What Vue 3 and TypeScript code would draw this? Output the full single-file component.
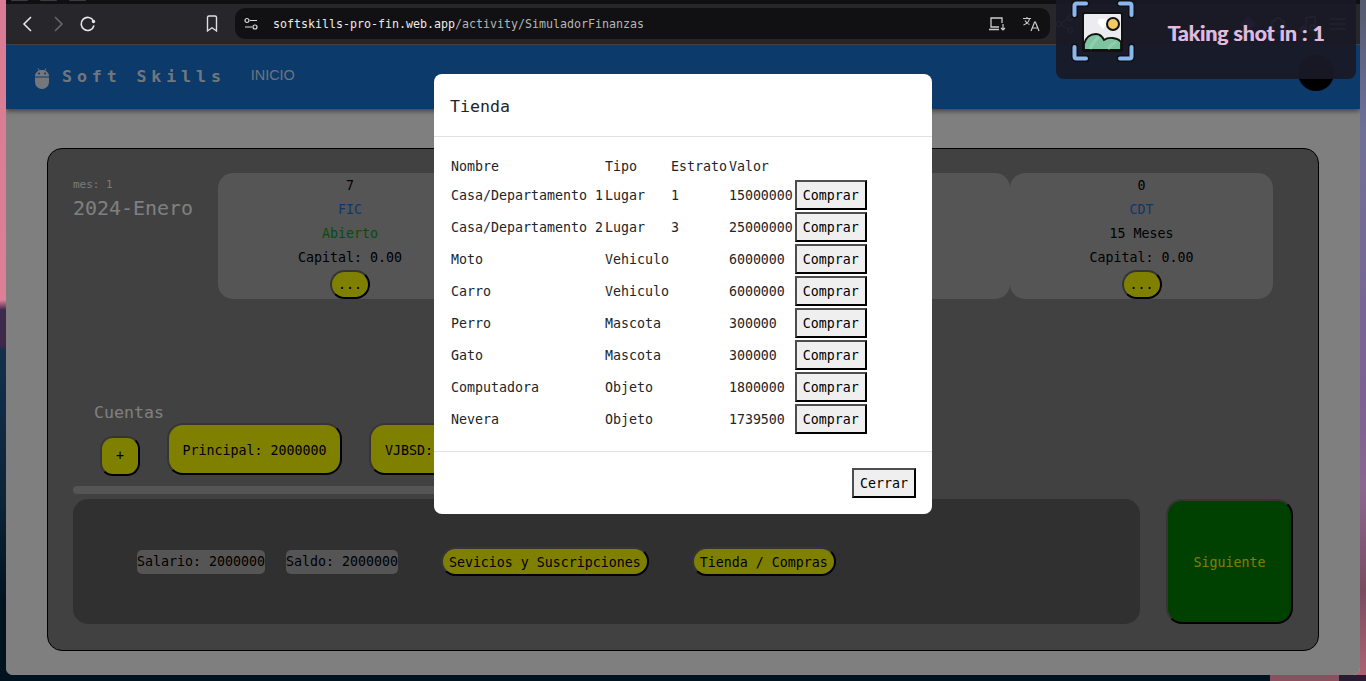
<script setup lang="ts">
interface Product {
  nombre: string
  tipo: string
  estrato: string
  valor: string
}

interface Fund {
  count: string
  name: string
  state: string
  stateClass: string
  capital: string
}

const products: Product[] = [
  { nombre: 'Casa/Departamento 1', tipo: 'Lugar', estrato: '1', valor: '15000000' },
  { nombre: 'Casa/Departamento 2', tipo: 'Lugar', estrato: '3', valor: '25000000' },
  { nombre: 'Moto', tipo: 'Vehiculo', estrato: '', valor: '6000000' },
  { nombre: 'Carro', tipo: 'Vehiculo', estrato: '', valor: '6000000' },
  { nombre: 'Perro', tipo: 'Mascota', estrato: '', valor: '300000' },
  { nombre: 'Gato', tipo: 'Mascota', estrato: '', valor: '300000' },
  { nombre: 'Computadora', tipo: 'Objeto', estrato: '', valor: '1800000' },
  { nombre: 'Nevera', tipo: 'Objeto', estrato: '', valor: '1739500' },
]

const funds: (Fund | null)[] = [
  { count: '7', name: 'FIC', state: 'Abierto', stateClass: 'open', capital: 'Capital: 0.00' },
  null,
  null,
  { count: '0', name: 'CDT', state: '15 Meses', stateClass: '', capital: 'Capital: 0.00' },
]
</script>

<template>
  <div class="screen">
    <div class="window">
      <div class="tabstrip">
        <span class="tab"></span><span class="tab"></span><span class="tab"></span>
      </div>
      <header class="toolbar">
        <svg class="tool" viewBox="0 0 20 20"><path d="M13 3 6 10l7 7" fill="none" stroke="#e6e6e6" stroke-width="1.6" /></svg>
        <svg class="tool" viewBox="0 0 20 20"><path d="m7 3 7 7-7 7" fill="none" stroke="#66666a" stroke-width="1.6" /></svg>
        <svg class="tool" viewBox="0 0 20 20">
          <path d="M15.5 7A6.5 6.5 0 1 0 16 11.5" fill="none" stroke="#e6e6e6" stroke-width="1.6" />
          <circle cx="15.5" cy="7.5" r="1.7" fill="#e6e6e6" />
        </svg>
        <svg class="tool bookmark" viewBox="0 0 20 20"><path d="M5.5 3.5a1.5 1.5 0 0 1 1.5-1.5h6a1.5 1.5 0 0 1 1.5 1.5V17L10 13.8 5.5 17z" fill="none" stroke="#e0e0e0" stroke-width="1.4" /></svg>
        <div class="address">
          <svg class="tune" viewBox="0 0 16 16">
            <circle cx="4" cy="4.5" r="2" fill="none" stroke="#ddd" stroke-width="1.2" />
            <path d="M7 4.5h7M2 11h7" stroke="#ddd" stroke-width="1.2" />
            <circle cx="12" cy="11" r="2" fill="none" stroke="#ddd" stroke-width="1.2" />
          </svg>
          <span class="url"><span class="host">softskills-pro-fin.web.app</span>/activity/SimuladorFinanzas</span>
          <div class="address-end">
            <svg class="tool" viewBox="0 0 20 20">
              <path d="M15 9V4H4v9h8M2 15.5h10" fill="none" stroke="#ccc" stroke-width="1.3" />
              <path d="M16 10v6m-2-2 2 2 2-2" fill="none" stroke="#ccc" stroke-width="1.2" />
            </svg>
            <svg class="tool" viewBox="0 0 20 20">
              <path d="M2 4.5h8M6 3v1.5M8.5 4.5C8 7.5 5.5 10 2.500 11M4 6.500c1 2 3 3.500 4.500 4" fill="none" stroke="#ccc" stroke-width="1.1" />
              <path d="m10 17 3.600-9h.8l3.600 9M11.300 14h5.400" fill="none" stroke="#ccc" stroke-width="1.2" />
            </svg>
          </div>
        </div>
        <svg class="tool share" viewBox="0 0 20 20">
          <circle cx="4" cy="10" r="2.4" fill="none" stroke="#ccc" />
          <circle cx="15" cy="4" r="2.4" fill="none" stroke="#ccc" />
          <circle cx="15" cy="16" r="2.4" fill="none" stroke="#ccc" />
          <path d="m6 9 7-4M6 11l7 4" stroke="#ccc" />
        </svg>
        <div class="tool-end">
          <svg class="tool" viewBox="0 0 20 20"><path d="m10 2 8 8-8 8-8-8z" fill="#8a5cf0" /></svg>
          <svg class="tool" viewBox="0 0 20 20"><path d="M4 7h3a3 3 0 0 1 6 0h3v4a3 3 0 0 1 0 5v2H4z" fill="none" stroke="#ccc" stroke-width="1.3" /></svg>
          <svg class="tool" viewBox="0 0 20 20">
            <path d="M8 15V4l9-2v11" fill="none" stroke="#ccc" stroke-width="1.3" />
            <circle cx="5.5" cy="15.5" r="2.5" fill="none" stroke="#ccc" stroke-width="1.3" />
            <circle cx="14.5" cy="13.5" r="2.5" fill="none" stroke="#ccc" stroke-width="1.3" />
          </svg>
          <svg class="tool" viewBox="0 0 20 20"><path d="M2 5h16M2 10h16M2 15h16" stroke="#ccc" stroke-width="1.3" /></svg>
        </div>
      </header>

      <main class="page">
        <nav class="navbar">
          <svg class="logo" viewBox="0 0 14 22">
            <path d="M3 1.5 4.5 4M11 1.5 9.5 4" stroke="#fff" stroke-opacity=".9" stroke-width="1" />
            <path d="M0 9.500C0 5.500 3 3 7 3s7 2.500 7 6.500z" fill="#fff" fill-opacity=".9" />
            <path d="M0 10.500h14V15a7 7 0 0 1-14 0z" fill="#fff" fill-opacity=".9" />
            <circle cx="4" cy="6.500" r="1" fill="#1874d6" />
            <circle cx="10" cy="6.500" r="1" fill="#1874d6" />
          </svg>
          <span class="brand">Soft Skills</span>
          <span class="nav-link">INICIO</span>
          <span class="avatar"></span>
        </nav>

        <section class="board">
          <div class="top-row">
            <div class="date">
              <div class="month">mes: 1</div>
              <div class="period">2024-Enero</div>
            </div>
            <div class="funds">
              <article v-for="(fund, index) in funds" :key="index" class="fund">
                <template v-if="fund">
                  <div class="line">{{ fund.count }}</div>
                  <div class="line fund-name">{{ fund.name }}</div>
                  <div class="line" :class="fund.stateClass">{{ fund.state }}</div>
                  <div class="line">{{ fund.capital }}</div>
                  <button class="yellow more" type="button">...</button>
                </template>
              </article>
            </div>
          </div>

          <div class="accounts">
            <div class="accounts-head">
              <div class="accounts-title">Cuentas</div>
              <button class="yellow add" type="button">+</button>
            </div>
            <button class="yellow account" type="button">Principal: 2000000</button>
            <button class="yellow account second" type="button">VJBSD:</button>
          </div>
          <div class="scrollbar"></div>

          <div class="bottom-row">
            <div class="panel">
              <span class="pill">Salario: 2000000</span>
              <span class="pill saldo">Saldo: 2000000</span>
              <button class="yellow action services" type="button">Sevicios y Suscripciones</button>
              <button class="yellow action shop" type="button">Tienda / Compras</button>
            </div>
            <button class="next" type="button">Siguiente</button>
          </div>
        </section>

        <div class="backdrop">
          <div class="modal">
            <div class="modal-head">Tienda</div>
            <div class="modal-body">
              <table>
                <thead>
                  <tr>
                    <th>Nombre</th>
                    <th>Tipo</th>
                    <th>Estrato</th>
                    <th>Valor</th>
                    <th></th>
                  </tr>
                </thead>
                <tbody>
                  <tr v-for="p in products" :key="p.nombre">
                    <td>{{ p.nombre }}</td>
                    <td>{{ p.tipo }}</td>
                    <td>{{ p.estrato }}</td>
                    <td>{{ p.valor }}</td>
                    <td class="buy"><button class="plain" type="button">Comprar</button></td>
                  </tr>
                </tbody>
              </table>
            </div>
            <div class="modal-foot">
              <button class="plain" type="button">Cerrar</button>
            </div>
          </div>
        </div>
      </main>
    </div>

    <aside class="shot">
      <svg class="shot-icon" viewBox="0 0 64 64">
        <g fill="none" stroke="#111" stroke-width="7" stroke-linecap="round">
          <path d="M3.500 15V5.500a2 2 0 0 1 2-2H15" />
          <path d="M49 3.500h9.500a2 2 0 0 1 2 2V15" />
          <path d="M3.500 47v9.500a2 2 0 0 0 2 2H15" />
          <path d="M49 58.500h9.500a2 2 0 0 0 2-2V47" />
        </g>
        <g fill="none" stroke="#8ab6f2" stroke-width="4" stroke-linecap="round">
          <path d="M3.500 15V5.500a2 2 0 0 1 2-2H15" />
          <path d="M49 3.500h9.500a2 2 0 0 1 2 2V15" />
          <path d="M3.500 47v9.500a2 2 0 0 0 2 2H15" />
          <path d="M49 58.500h9.500a2 2 0 0 0 2-2V47" />
        </g>
        <rect x="12" y="13" width="39" height="38" rx="2" fill="#ececf0" stroke="#111" stroke-width="2" />
        <path d="M28 19h8l1.500 4-5.500 6-5.500-6z" fill="#fff" />
        <path d="M13 44C15 37 20 34 25 34c4 0 6 2 8 6 4-3 13-3 17 2v7a1 1 0 0 1-1 1H14a1 1 0 0 1-1-1z" fill="#7fc4a0" stroke="#111" stroke-width="1.800" />
        <path d="M19 49c2-5 5-9 9-12M37 49c2-3 4-5 8-7" fill="none" stroke="#93cfae" stroke-width="3" />
        <circle cx="42" cy="24" r="6" fill="#f4c962" stroke="#111" stroke-width="2" />
      </svg>
      <span class="shot-text">Taking shot in : 1</span>
    </aside>
  </div>
</template>

<style scoped>
.screen {
  position: relative;
  width: 1366px;
  height: 681px;
  overflow: hidden;
  font-family: "DejaVu Sans Mono", "Liberation Mono", monospace;
  font-size: 13.29px;
  line-height: 24px;
  background:
    linear-gradient(90deg, #021320 0 93%, #8a5060 93% 98%, #2a1c30 98%) bottom / 100% 6px no-repeat,
    linear-gradient(180deg, #d97b95 0, #dc7f98 300px, #3c2a4c 310px, #40284a 345px, #14304c 350px, #0b2438 500px, #021320 600px, #021320 681px) left / 50% 100% no-repeat,
    linear-gradient(180deg, #555a6e 0, #6f7098 130px, #7c6194 400px, #8b6690 490px, #7a4c60 590px, #b06474 681px) right / 50% 100% no-repeat;
}

.window {
  display: flex;
  flex-direction: column;
  width: 1354px;
  height: 675px;
  margin-left: 6px;
  overflow: hidden;
  border-radius: 0 0 7px 7px;
}

.tabstrip {
  display: flex;
  gap: 12px;
  flex: none;
  height: 4px;
  padding-left: 5px;
  background: #101012;
}

.tab {
  width: 17px;
  height: 1px;
  border-radius: 0 0 3px 3px;
  background: #3c3c40;
}

.toolbar {
  display: flex;
  flex: none;
  align-items: center;
  box-sizing: border-box;
  height: 41px;
  padding: 0 12px;
  border-bottom: 1px solid #48484c;
  background: #26262b;
}

.tool {
  flex: none;
  width: 20px;
  height: 20px;
}

.toolbar > .tool + .tool {
  margin-left: 10px;
}

.toolbar > .tool.bookmark {
  margin-left: 104px;
}

.address {
  display: flex;
  align-items: center;
  flex: none;
  box-sizing: border-box;
  width: 815px;
  height: 31px;
  margin-left: 13px;
  margin-bottom: 1px;
  padding: 0 9px 0 8px;
  border-radius: 10px;
  background: #111113;
}

.tune {
  width: 16px;
  height: 16px;
}

.url {
  margin-left: 14px;
  color: #b6b6ba;
  font-size: 11.63px;
}

.host {
  color: #ececec;
}

.address-end {
  display: flex;
  gap: 14px;
  margin-left: auto;
}

.toolbar > .tool.share {
  margin-left: 5px;
}

.tool-end {
  display: flex;
  gap: 10px;
  margin-left: auto;
}

.page {
  position: relative;
  flex: 1;
  min-height: 0;
  background: #fff;
}

.navbar {
  display: flex;
  align-items: center;
  box-sizing: border-box;
  height: 64px;
  padding-left: 29px;
  background: #1874d6;
  box-shadow: 0 2px 5px rgba(0, 0, 0, 0.5);
}

.logo {
  flex: none;
  width: 14px;
  height: 22px;
  margin-top: 1px;
}

.brand {
  margin-left: 13px;
  color: rgba(255, 255, 255, 0.9);
  font-size: 16.6px;
  font-weight: 700;
  letter-spacing: 4.9px;
}

.nav-link {
  margin-left: 25px;
  margin-bottom: 5px;
  color: rgba(255, 255, 255, 0.85);
  font-family: "Liberation Sans", Arial, sans-serif;
  font-size: 14.4px;
}

.avatar {
  align-self: flex-start;
  width: 36px;
  height: 36px;
  margin: 10px 26px 0 auto;
  border-radius: 50%;
  background: #000;
}

.board {
  box-sizing: border-box;
  height: 503px;
  margin: 39px 41px 0;
  padding: 24px 25px 0;
  border: 1px solid #000;
  border-radius: 15px;
  background: #828282;
}

.top-row {
  display: flex;
  height: 126px;
}

.date {
  flex: none;
  width: 145px;
  color: #fff;
}

.month {
  padding-top: 1px;
  font-size: 11px;
  line-height: 22px;
  opacity: 0.9;
}

.period {
  font-size: 19.93px;
  line-height: 26px;
}

.funds {
  display: flex;
  flex: 1;
}

.fund {
  display: flex;
  flex: none;
  flex-direction: column;
  align-items: center;
  width: 264px;
  border-radius: 15px;
  background: #aaa;
  color: #000;
}

.fund:last-child {
  width: 263px;
}

.line {
  box-sizing: border-box;
  height: 24px;
  padding-top: 1px;
}

.fund-name {
  color: #1c70d0;
}

.open {
  color: #109a10;
}

.yellow {
  box-sizing: border-box;
  padding: 0;
  border: 2px solid;
  border-color: #6a6a6a #000 #000 #6a6a6a;
  background: #ff0;
  color: #000;
  font: inherit;
}

.more {
  width: 40px;
  height: 29px;
  margin-top: 1px;
  border-radius: 15px;
}

.accounts {
  display: flex;
  align-items: flex-end;
  height: 76px;
  margin-top: 101px;
}

.accounts-head {
  flex: none;
  width: 94px;
}

.accounts-title {
  box-sizing: border-box;
  height: 36px;
  padding: 1px 0 0 21px;
  color: #fff;
  font-size: 16.6px;
}

.add {
  display: block;
  width: 40px;
  height: 40px;
  margin-left: 27px;
  border-radius: 13px;
}

.account {
  width: 175px;
  height: 52px;
  margin-bottom: 1px;
  padding-top: 4px;
  border-radius: 16px;
}

.second {
  margin-left: 27px;
  padding-left: 14px;
  text-align: left;
}

.scrollbar {
  width: 720px;
  height: 8px;
  margin-top: 10px;
  border-radius: 4px;
  background: #aaa;
}

.bottom-row {
  display: flex;
  gap: 26px;
  height: 125px;
  margin-top: 5px;
}

.panel {
  display: flex;
  flex: 1;
  align-items: center;
  padding-left: 64px;
  border-radius: 15px;
  background: #606060;
}

.pill {
  height: 24px;
  border-radius: 5px;
  background: #aaa;
  color: #000;
}

.saldo {
  margin-left: 21px;
}

.action {
  height: 29px;
  padding: 2px 6px 0;
  border-radius: 15px;
  line-height: 24px;
}

.services {
  margin-left: 43px;
}

.shop {
  margin-left: 43px;
}

.next {
  flex: none;
  box-sizing: border-box;
  width: 127px;
  height: 125px;
  padding: 2px 0 0;
  border: 2px solid;
  border-color: #6a6a6a #000 #000 #6a6a6a;
  border-radius: 16px;
  background: #008000;
  color: #ff0;
  font: inherit;
}

.backdrop {
  position: absolute;
  inset: 0;
  display: flex;
  justify-content: center;
  align-items: flex-start;
  padding-top: 29px;
  background: rgba(0, 0, 0, 0.5);
}

.modal {
  box-sizing: border-box;
  width: 498px;
  height: 440px;
  border-radius: 8px;
  background: #fff;
  color: #212529;
}

.modal-head {
  box-sizing: border-box;
  height: 63px;
  padding: 18px 16px 0;
  border-bottom: 1px solid #dee2e6;
  font-size: 16.6px;
  line-height: 30px;
}

.modal-body {
  box-sizing: border-box;
  height: 315px;
  padding: 15px 15px 0;
  border-bottom: 1px solid #dee2e6;
}

table {
  border-collapse: separate;
  border-spacing: 2px;
}

th,
td {
  padding: 2px 0 0;
  font-weight: 400;
  text-align: left;
  white-space: nowrap;
}

th {
  line-height: 22px;
}

td.buy {
  padding: 0;
}

.plain {
  display: block;
  box-sizing: border-box;
  height: 30px;
  padding: 2px 6px 0;
  border: 2px solid;
  border-color: #4d4d4d #000 #000 #4d4d4d;
  background: #efefef;
  color: #000;
  font: inherit;
}

.modal-foot {
  display: flex;
  justify-content: flex-end;
  padding: 16px;
}

.shot {
  position: absolute;
  top: 0;
  left: 1056px;
  display: flex;
  align-items: flex-start;
  box-sizing: border-box;
  width: 300px;
  height: 79px;
  padding-left: 15px;
  border-radius: 0 0 8px 8px;
  background: rgba(25, 25, 39, 0.95);
}

.shot-icon {
  flex: none;
  width: 64px;
  height: 64px;
}

.shot-text {
  margin: 20px 0 0 33px;
  color: #ebb8d9;
  font-family: Lato, "Noto Sans", sans-serif;
  font-size: 21.1px;
  font-weight: 700;
  line-height: 26px;
  white-space: nowrap;
  text-shadow: -0.6px 0 0 #8ab6f2;
}
</style>

<style>
html,
body {
  margin: 0;
  overflow: hidden;
}
</style>
